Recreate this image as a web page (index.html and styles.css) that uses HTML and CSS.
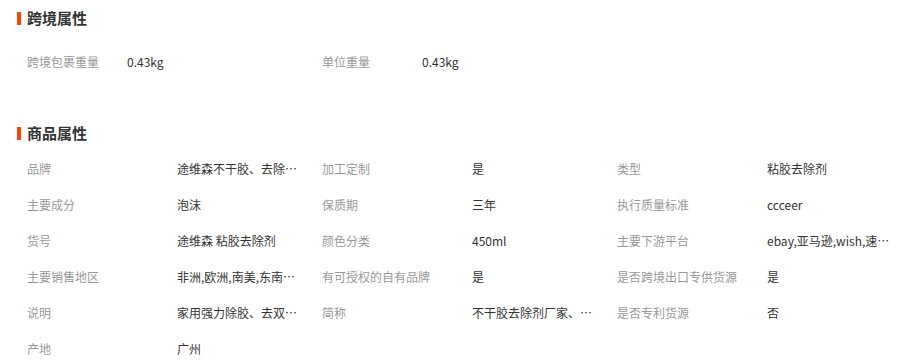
FILE: index.html
```html
<!DOCTYPE html>
<html lang="zh-CN">
<head>
<meta charset="utf-8">
<link rel="stylesheet" href="styles.css">
</head>
<body>
<div class="page">
  <section class="sec sec-cross">
    <h2 class="sec-title">跨境属性</h2>
    <div class="grid grid-cross">
      <div class="lbl">跨境包裹重量</div><div class="val">0.43kg</div>
      <div class="lbl">单位重量</div><div class="val">0.43kg</div>
    </div>
  </section>
  <section class="sec sec-goods">
    <h2 class="sec-title">商品属性</h2>
    <div class="grid grid-goods">
      <div class="lbl">品牌</div><div class="val">途维森不干胶、去除剂厂家</div>
      <div class="lbl">加工定制</div><div class="val">是</div>
      <div class="lbl">类型</div><div class="val">粘胶去除剂</div>

      <div class="lbl">主要成分</div><div class="val">泡沫</div>
      <div class="lbl">保质期</div><div class="val">三年</div>
      <div class="lbl">执行质量标准</div><div class="val">ccceer</div>

      <div class="lbl">货号</div><div class="val">途维森 粘胶去除剂</div>
      <div class="lbl">颜色分类</div><div class="val">450ml</div>
      <div class="lbl">主要下游平台</div><div class="val">ebay,亚马逊,wish,速卖通</div>

      <div class="lbl">主要销售地区</div><div class="val">非洲,欧洲,南美,东南亚,北美</div>
      <div class="lbl">有可授权的自有品牌</div><div class="val">是</div>
      <div class="lbl">是否跨境出口专供货源</div><div class="val">是</div>

      <div class="lbl">说明</div><div class="val">家用强力除胶、去双面胶</div>
      <div class="lbl">简称</div><div class="val">不干胶去除剂厂家、除胶剂</div>
      <div class="lbl">是否专利货源</div><div class="val">否</div>

      <div class="lbl">产地</div><div class="val">广州</div>
    </div>
  </section>
</div>
</body>
</html>
```

FILE: styles.css
```css
html, body {
  margin: 0;
  padding: 0;
  background: #fff;
}
body {
  font-family: "Noto Sans CJK SC", "Noto Sans", sans-serif;
  font-size: 12px;
  color: #333;
}
.page {
  padding: 10px 0 0 17px;
}
.sec-title {
  margin: 0;
  display: flex;
  align-items: center;
  height: 16px;
  font-size: 15px;
  font-weight: bold;
  color: #333;
  line-height: 16px;
}
.sec-title::before {
  content: "";
  width: 4px;
  height: 13px;
  background: #ff4400;
  margin-right: 6px;
}
.grid {
  display: grid;
  padding-left: 10px;
  grid-auto-rows: 36px;
  align-items: center;
}
.grid-cross {
  margin-top: 17px;
  grid-template-columns: 100px 195px 100px 195px;
}
.sec-goods {
  margin-top: 46px;
}
.grid-goods {
  margin-top: 9px;
  grid-template-columns: 150px 145px 150px 145px 150px 145px;
}
.lbl {
  color: #999;
  white-space: nowrap;
}
.val {
  color: #333;
  max-width: 126px;
  white-space: nowrap;
  overflow: hidden;
  text-overflow: ellipsis;
}
```
